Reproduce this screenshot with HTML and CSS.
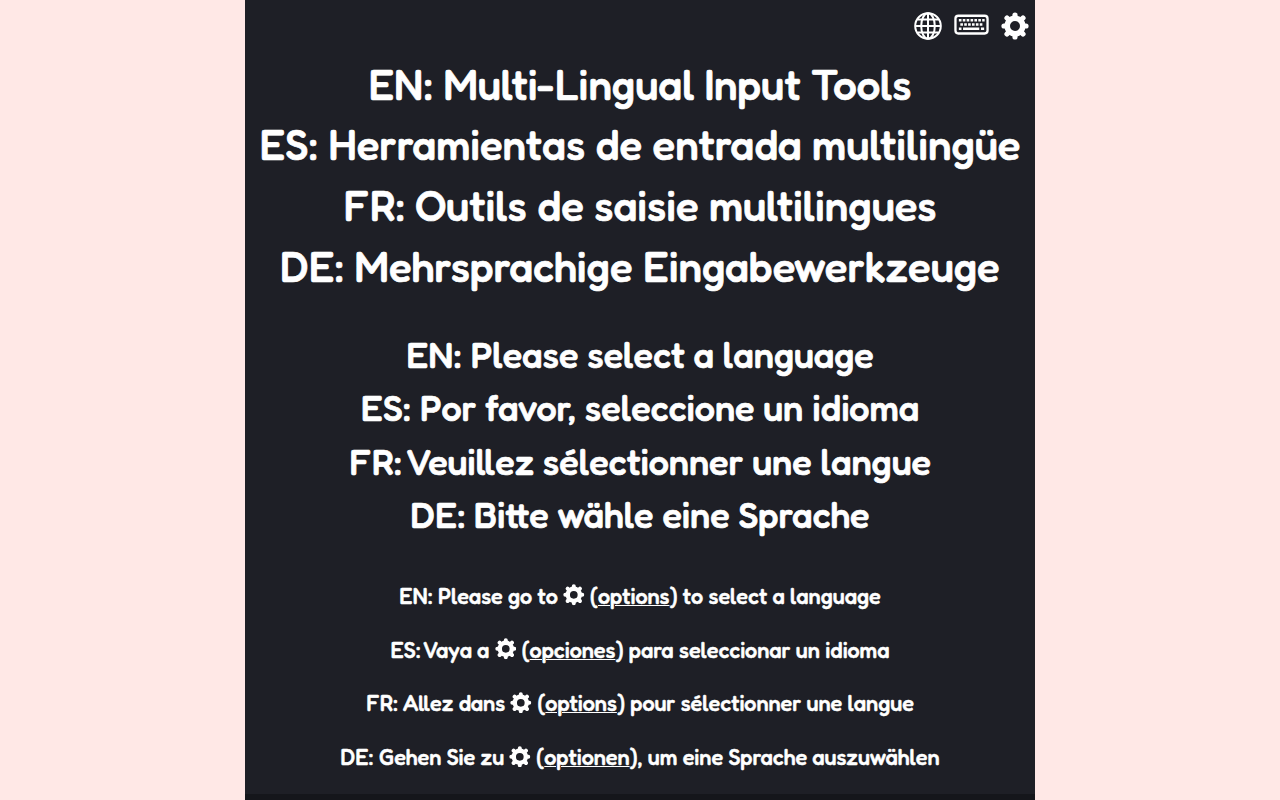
FILE: index.html
```html
<!DOCTYPE html>
<html lang="en">
<head>
<meta charset="utf-8">
<title>Multi-Lingual Input Tools</title>
<link rel="stylesheet" href="styles.css">
</head>
<body>
<svg width="0" height="0" class="defs" aria-hidden="true">
  <symbol id="gear" viewBox="0 0 28 28"><g fill="none" stroke="currentColor"><circle cx="14" cy="14" r="7.8" stroke-width="5.6"/><path stroke-width="5.2" stroke-linecap="round" d="M14 3V5M14 23V25M3 14H5M23 14H25M6 6L7.6 7.6M20.4 20.4L22 22M6 22L7.6 20.4M20.4 7.6L22 6"/></g></symbol>
</svg>
<main class="panel">
  <nav class="toolbar">
    <svg class="globe" viewBox="0 0 28 28" fill="none" stroke="currentColor" stroke-width="2"><circle cx="14" cy="14" r="12.8"/><ellipse cx="14" cy="14" rx="6.8" ry="12.8"/><path d="M14 1V27M1 14H27M3.4 7.4H24.6M3.4 20.6H24.6"/></svg>
    <svg class="keyboard" viewBox="0 0 36 22" fill="none" stroke="currentColor"><rect x="1.5" y="1.5" width="33" height="18.2" rx="3" stroke-width="2.4"/><path stroke-width="2.5" stroke-dasharray="2.7 1.3" d="M5 6.2H31.5"/><path stroke-width="2.5" stroke-dasharray="2.7 1.3" d="M6.5 10.4H30.5"/><path stroke-width="2.5" d="M5 14.8H7.7M9.3 14.8H26M27.7 14.8H31"/></svg>
    <svg class="gear"><use href="#gear"/></svg>
  </nav>
  <h1 class="title">
    <span>EN: Multi-Lingual Input Tools</span>
    <span>ES: Herramientas de entrada multilingüe</span>
    <span>FR: Outils de saisie multilingues</span>
    <span>DE: Mehrsprachige Eingabewerkzeuge</span>
  </h1>
  <h2 class="subtitle">
    <span>EN: Please select a language</span>
    <span>ES: Por favor, seleccione un idioma</span>
    <span>FR: Veuillez sélectionner une langue</span>
    <span>DE: Bitte wähle eine Sprache</span>
  </h2>
  <div class="hints">
    <p>EN: Please go to <svg class="cog"><use href="#gear"/></svg> (<a>options</a>) to select a language</p>
    <p>ES: Vaya a <svg class="cog"><use href="#gear"/></svg> (<a>opciones</a>) para seleccionar un idioma</p>
    <p>FR: Allez dans <svg class="cog"><use href="#gear"/></svg> (<a>options</a>) pour sélectionner une langue</p>
    <p>DE: Gehen Sie zu <svg class="cog"><use href="#gear"/></svg> (<a>optionen</a>), um eine Sprache auszuwählen</p>
  </div>
  <div class="footer"></div>
</main>
</body>
</html>
```
FILE: styles.css
```css
body { margin: 0; height: 800px; overflow: hidden; background: #ffe8e6; }
.defs { position: absolute; }
.panel { width: 790px; height: 800px; margin: 0 auto; overflow: hidden; display: flex; flex-direction: column; background: #1e1f26; color: #fff; font-family: Fredoka, Lato, sans-serif; font-weight: 500; text-align: center; white-space: nowrap; }
.toolbar { display: flex; justify-content: flex-end; gap: 12px; height: 40px; padding: 12px 6px 0 0; box-sizing: border-box; flex: none; }
.globe { width: 28px; height: 28px; }
.keyboard { width: 35px; height: 22px; margin-top: 1.5px; }
.gear { width: 28px; height: 28px; }
.title, .subtitle { margin: 0; font-weight: 500; -webkit-text-stroke: 0.7px #fff; }
.title span, .subtitle span { display: block; }
.title { margin-top: 14.5px; font-size: 41.88px; line-height: 60.7px; }
.subtitle { margin-top: 30.7px; font-size: 35.95px; line-height: 53.3px; }
.hints { margin-top: 28.7px; font-size: 21.6px; line-height: 53.8px; -webkit-text-stroke: 0.5px #fff; }
.hints p { margin: 0; }
.hints a { text-decoration: underline; text-decoration-thickness: 1px; }
.cog { width: 21.6px; height: 21.6px; vertical-align: -2px; }
.footer { margin-top: auto; height: 6px; flex: none; background: #15161b; }
```
